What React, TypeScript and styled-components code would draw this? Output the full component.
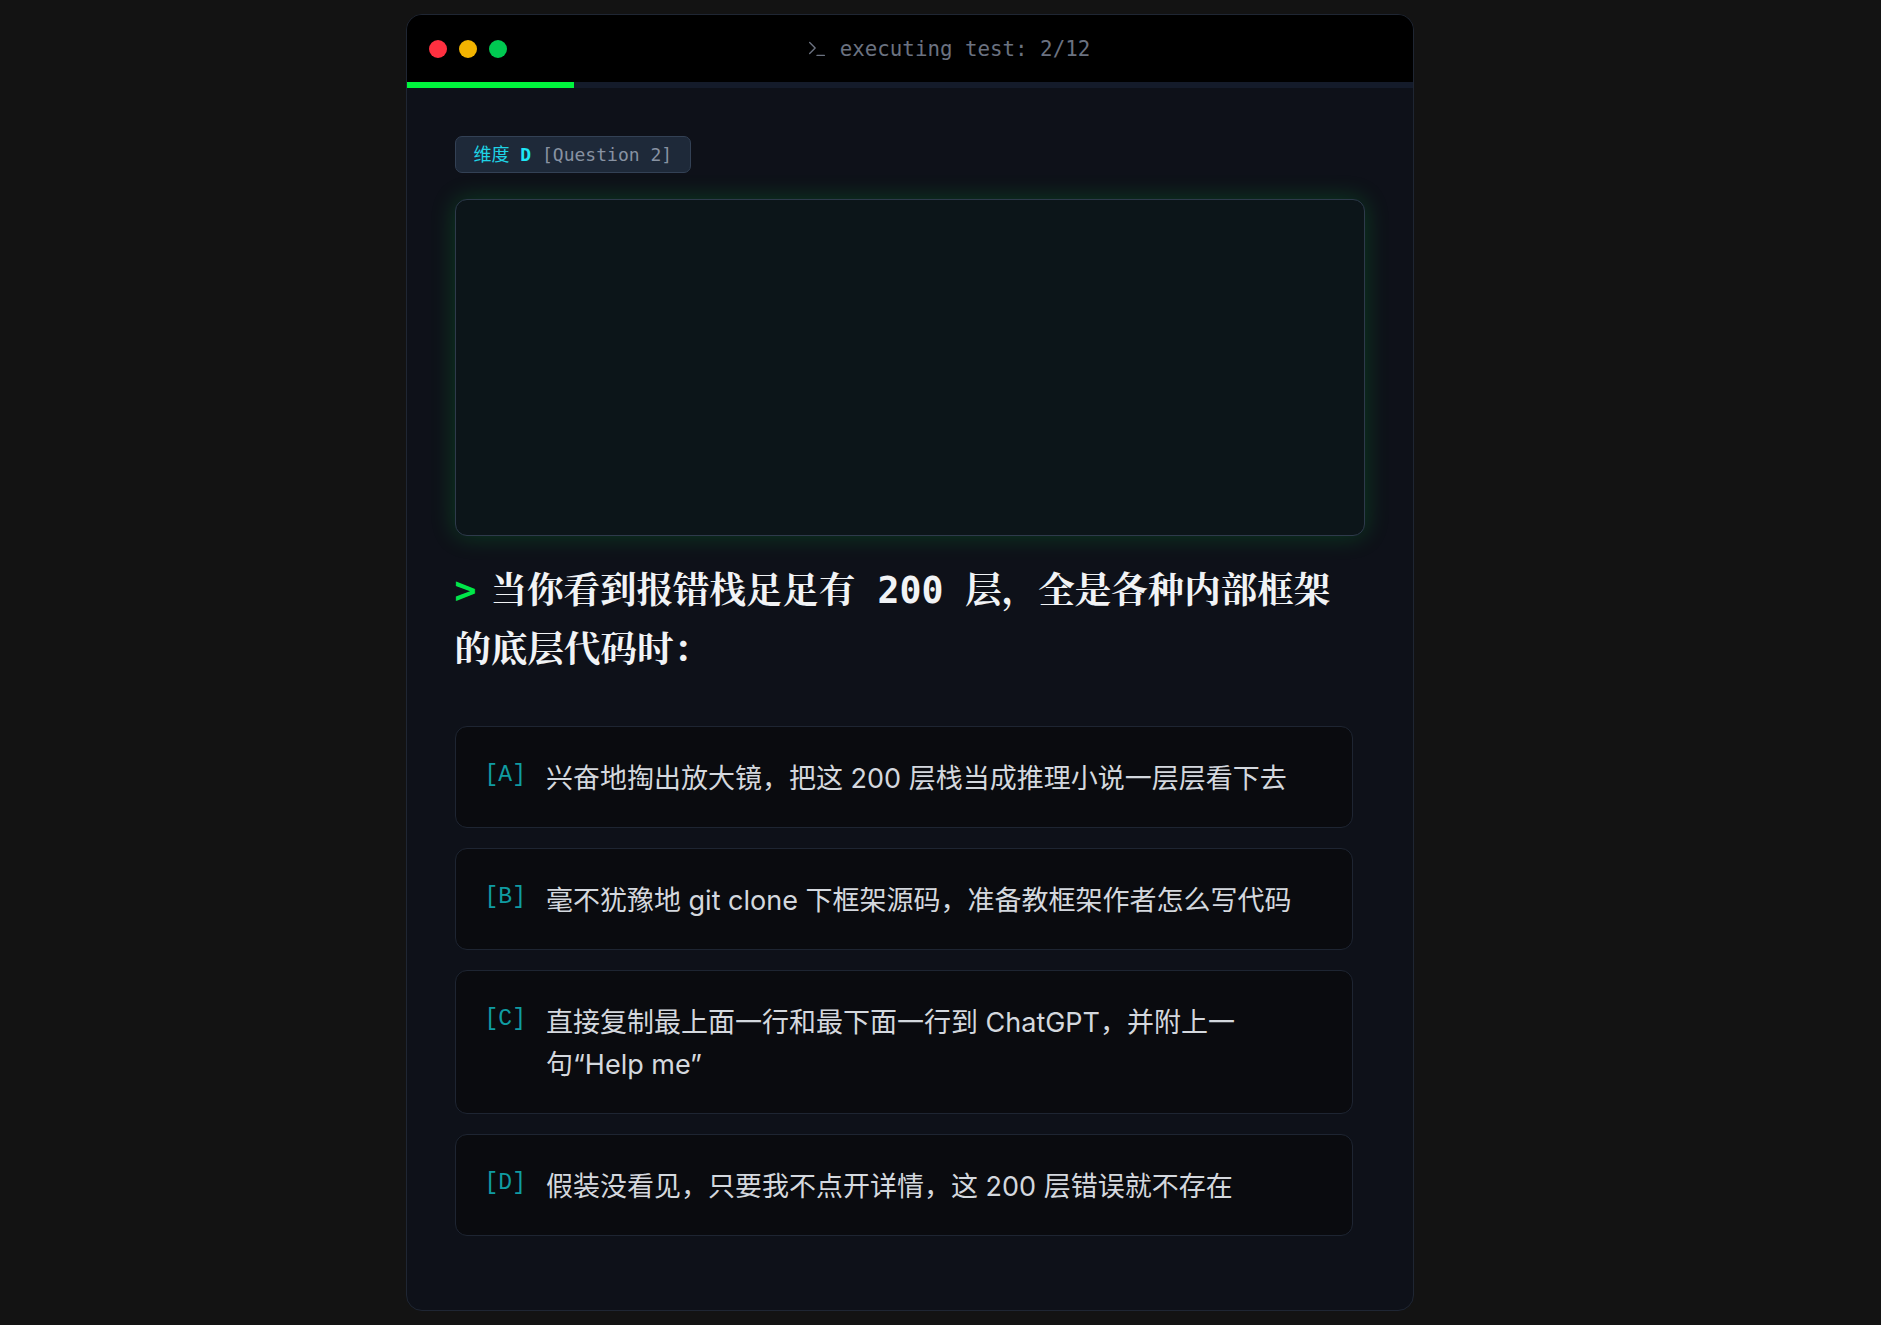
import React from "react";
import styled, { createGlobalStyle } from "styled-components";
import { Terminal } from "lucide-react";

const GlobalStyle = createGlobalStyle`
  html, body {
    margin: 0;
    padding: 0;
    background: #131313;
  }
  body {
    font-family: Inter, "Noto Sans CJK SC", sans-serif;
  }
`;

const Page = styled.div`
  display: flex;
  justify-content: center;
  padding: 14px 62px 15px 0;
`;

const Window = styled.div`
  box-sizing: border-box;
  width: 1008px;
  background: #0e1119;
  border: 1px solid #1f2633;
  border-radius: 16px;
  overflow: hidden;
  display: flex;
  flex-direction: column;
`;

const TitleBar = styled.div`
  height: 67px;
  background: #000;
  display: flex;
  align-items: center;
  padding: 0 23px 0 22px;
`;

const Dots = styled.div`
  display: flex;
  gap: 12px;
`;

const Dot = styled.span<{ $color: string }>`
  width: 18px;
  height: 18px;
  border-radius: 50%;
  background: ${(p) => p.$color};
`;

const Title = styled.div`
  flex: 1;
  display: flex;
  justify-content: center;
  align-items: center;
  gap: 12px;
  color: #6b7280;
  font-family: "DejaVu Sans Mono", "Liberation Mono", monospace;
  font-size: 20.8px;
`;

const Track = styled.div`
  height: 6px;
  background: #141b2a;
`;

const Fill = styled.div`
  height: 100%;
  background: #00f53d;
`;

const Body = styled.div`
  padding: 48px 48px 74px 48px;
  display: flex;
  flex-direction: column;
  align-items: flex-start;
`;

const Badge = styled.div`
  background: #1e2939;
  border: 1px solid #334155;
  border-radius: 7px;
  padding: 4px 18px;
  font-family: "DejaVu Sans Mono", "Noto Sans CJK SC", monospace;
  font-size: 18px;
  line-height: 27px;
  color: #8892a2;
`;

const Dim = styled.span`
  color: #1fd4e6;
`;

const DimKey = styled.b`
  color: #1ee6f5;
`;

const Visual = styled.div`
  margin-top: 26px;
  width: 100%;
  box-sizing: border-box;
  height: 337px;
  background: #0c1519;
  border: 1px solid #2e3a4b;
  border-radius: 12px;
  box-shadow: 0 0 24px rgba(0, 220, 70, 0.22);
`;

const Question = styled.h2`
  margin: 25px 0 0;
  padding-right: 20px;
  font-family: "DejaVu Sans Mono", "Noto Serif CJK SC", "Noto Sans CJK SC", monospace;
  font-size: 36.5px;
  line-height: 59px;
  font-weight: 700;
  color: #f1f3f5;
`;

const Prompt = styled.span`
  color: #00e64a;
  margin-right: 14px;
`;

const Options = styled.div`
  margin-top: 47px;
  width: calc(100% - 12px);
  display: flex;
  flex-direction: column;
  gap: 20px;
`;

const Option = styled.div`
  display: flex;
  align-items: flex-start;
  gap: 20px;
  background: #0a0b0f;
  border: 1px solid #1e2532;
  border-radius: 12px;
  padding: 31px 48px 27px 29px;
`;

const Label = styled.span`
  flex-shrink: 0;
  font-family: "Liberation Mono", "DejaVu Sans Mono", monospace;
  font-size: 23px;
  line-height: 34px;
  color: #109ca2;
`;

const OptionText = styled.span`
  font-family: Inter, "Noto Sans CJK SC", sans-serif;
  font-size: 27px;
  line-height: 42px;
  color: #d4d8de;
`;

const options = [
  { key: "A", text: "兴奋地掏出放大镜，把这 200 层栈当成推理小说一层层看下去" },
  { key: "B", text: "毫不犹豫地 git clone 下框架源码，准备教框架作者怎么写代码" },
  { key: "C", text: "直接复制最上面一行和最下面一行到 ChatGPT，并附上一句“Help me”" },
  { key: "D", text: "假装没看见，只要我不点开详情，这 200 层错误就不存在" },
];

export default function App() {
  const current = 2;
  const total = 12;
  return (
    <>
      <GlobalStyle />
      <Page>
        <Window>
          <TitleBar>
            <Dots>
              <Dot $color="#ff3040" />
              <Dot $color="#f2b300" />
              <Dot $color="#00c951" />
            </Dots>
            <Title>
              <Terminal size={22} strokeWidth={1.5} />
              <span>
                executing test: {current}/{total}
              </span>
            </Title>
          </TitleBar>
          <Track>
            <Fill style={{ width: `${(current / total) * 100}%` }} />
          </Track>
          <Body>
            <Badge>
              <Dim>维度 </Dim>
              <DimKey>D</DimKey> [Question 2]
            </Badge>
            <Visual />
            <Question>
              <Prompt>&gt;</Prompt>当你看到报错栈足足有 200 层，全是各种内部框架的底层代码时：
            </Question>
            <Options>
              {options.map((o) => (
                <Option key={o.key}>
                  <Label>[{o.key}]</Label>
                  <OptionText>{o.text}</OptionText>
                </Option>
              ))}
            </Options>
          </Body>
        </Window>
      </Page>
    </>
  );
}
